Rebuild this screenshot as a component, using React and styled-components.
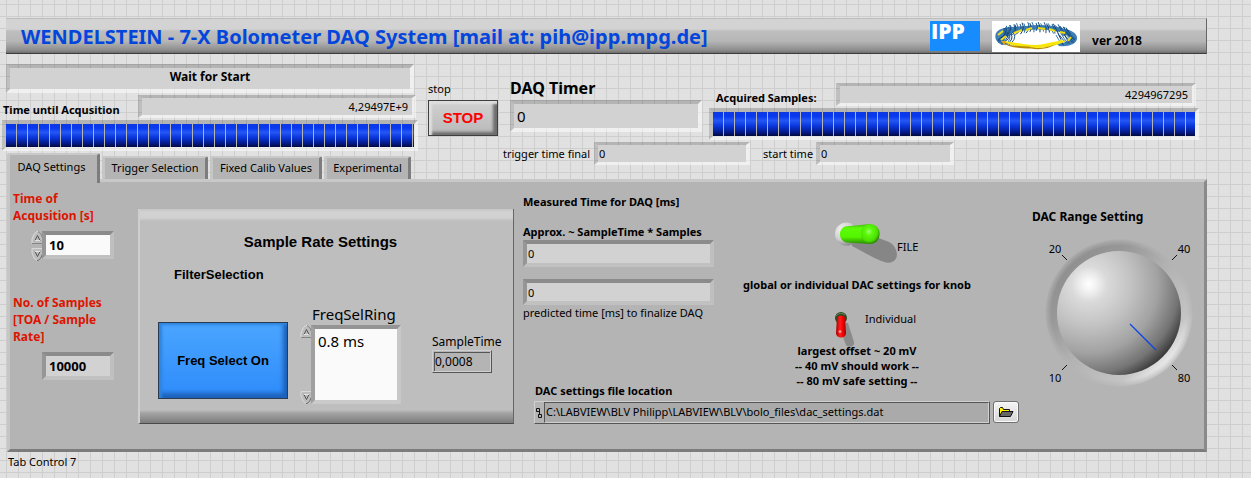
import React from "react";
import styled, { createGlobalStyle, css } from "styled-components";

const UI = `"Noto Sans", "Open Sans", sans-serif`;
const ARIAL = `"Liberation Sans", Arial, sans-serif`;

const GlobalStyle = createGlobalStyle`
  * { box-sizing: border-box; }
  body {
    margin: 0;
    min-height: 100vh;
    background-color: #e1e1e1;
    background-image:
      linear-gradient(to right, #cecece 1px, transparent 1px),
      linear-gradient(to bottom, #cecece 1px, transparent 1px);
    background-size: 12px 12px;
    background-position: 6px 4px;
    font-family: ${UI};
    font-size: 11px;
    line-height: 16px;
    color: #000;
  }
  input, button, select, output { font: inherit; color: inherit; }
`;

const Page = styled.main`
  padding: 18px 44px 8px 0;
`;

/* ---------- header ---------- */

const Header = styled.header`
  display: flex;
  align-items: flex-start;
  height: 36px;
  margin-left: 6px;
  padding: 2px 64px 0 15px;
  border-top: 1px solid #bdbdbd;
  border-right: 1px solid #666;
  border-bottom: 1px solid #3c3c3c;
  background: linear-gradient(#d3d3d3 0 10px, #bebebe 12px, #b6b6b6 22px, #8e8e8e 31px, #6e6e6e);
`;

const Title = styled.h1`
  flex: 1;
  margin: 0;
  font-size: 20px;
  line-height: 31px;
  font-weight: 700;
  color: #0446dc;
  white-space: nowrap;
`;

const IppLogo = styled.span`
  width: 50px;
  height: 30px;
  margin: 0 12px 0 0;
  padding-left: 1px;
  background: #168cff;
  color: #fff;
  font-family: "Open Sans", sans-serif;
  font-size: 21px;
  line-height: 20px;
  font-weight: 800;
`;

const Version = styled.span`
  padding: 11px 0 0 12px;
  font-size: 12px;
  line-height: 18px;
  font-weight: 700;
`;

/* ---------- shared parts ---------- */

const bevel = {
  page: css`
    border-color: rgba(0, 0, 0, 0.2) rgba(255, 255, 255, 0.5) rgba(255, 255, 255, 0.5) rgba(0, 0, 0, 0.15);
  `,
  panel: css`
    border-color: #8b8b8b #bfbfbf #c1c1c1 #969696;
  `,
};

const Field = styled.input`
  display: block;
  width: ${(p) => p.$width || "100%"};
  min-width: 0;
  height: ${(p) => p.$height || 23}px;
  padding: 0 4px 0 ${(p) => (p.$size ? 3 : 1)}px;
  border: ${(p) => (p.$height > 23 ? 4 : 3)}px solid;
  ${(p) => bevel[p.$on || "page"]}
  border-left-width: 4px;
  border-right-width: 4px;
  border-radius: 0;
  outline: none;
  background: ${(p) => (p.$editable ? "#fafafa" : "#d2d2d2")} padding-box;
  font-size: ${(p) => p.$size || 11}px;
  font-weight: ${(p) => (p.$bold ? 700 : 400)};
  text-align: ${(p) => p.$align || "left"};
`;

const Label = styled.label`
  display: block;
  font-size: ${(p) => p.$size || 11}px;
  font-weight: ${(p) => (p.$bold ? 700 : 400)};
  line-height: ${(p) => p.$line || 16}px;
  white-space: nowrap;
`;

const Message = styled.output`
  display: block;
  height: 29px;
  margin: 0 4px;
  border: 4px solid;
  ${bevel.page}
  background: #d2d2d2 padding-box;
  font-size: 12px;
  font-weight: 700;
  line-height: 18px;
  text-align: center;
`;

const Progress = styled.div`
  height: 32px;
  border: 4px solid;
  ${bevel.page}
  background:
    repeating-linear-gradient(to right, transparent 0 10px, #b4b4b4 10px 11px) padding-box,
    linear-gradient(#0d38e2, #0839f0 18%, #2457f5 36%, #0a36dc 58%, #041c90 82%, #02093f) padding-box;
`;

/* ---------- status area ---------- */

const Status = styled.section`
  display: flex;
  align-items: stretch;
  height: 125px;
`;

const StatusLeft = styled.div`
  display: flex;
  flex-direction: column;
  width: 416px;
  margin-left: 2px;
  padding-top: 10px;
`;

const CountdownRow = styled.div`
  display: flex;
  justify-content: space-between;
  align-items: flex-end;
  margin: 2px 2px 2px 1px;
`;

const StatusRight = styled.div`
  flex: 1;
  min-width: 0;
  padding: 9px 8px 0 10px;
`;

const MonitorRow = styled.div`
  display: flex;
  align-items: flex-start;
  margin-bottom: 2px;
`;

const StopGroup = styled.div`
  width: 82px;
  padding-top: 18px;
`;

const TimerGroup = styled.div`
  width: 192px;
  margin-right: 7px;
  padding-top: 13px;
`;

const SamplesGroup = styled.div`
  flex: 1;
  min-width: 0;
  padding-top: 20px;
`;

const SamplesRow = styled.div`
  display: flex;
  align-items: flex-end;
  justify-content: space-between;
  margin: 0 3px 2px 7px;
`;

const TimesRow = styled.div`
  display: flex;
  align-items: center;
  padding-left: 75px;
`;

const TimeItem = styled.div`
  display: flex;
  align-items: center;
  justify-content: space-between;
  width: ${(p) => p.$width}px;
  margin-right: 13px;
`;

const StopButton = styled.button`
  display: block;
  width: 70px;
  height: 36px;
  margin-top: 3px;
  padding: 0;
  border: 1px solid #3f3f3f;
  border-radius: 0;
  background: linear-gradient(#d2d2d2, #b8b8b8);
  box-shadow: inset 3px 3px 2px #dedede, inset -4px -3px 3px #6d6d6d;
  color: #f00;
  font-family: ${ARIAL};
  font-size: 15px;
  font-weight: 700;
`;

/* ---------- tabs ---------- */

const TabList = styled.div`
  display: flex;
  align-items: flex-end;
  gap: 2px;
  height: 28px;
  margin: auto 0 0 5px;
`;

const Tab = styled.button`
  height: ${(p) => (p.$active ? 30 : 23)}px;
  width: ${(p) => p.$width}px;
  margin-bottom: ${(p) => (p.$active ? -4 : 0)}px;
  padding: ${(p) => (p.$active ? "0 4px 5px 0" : "0 0 2px")};
  position: relative;
  border: solid;
  border-width: 2px 3px 0 3px;
  border-color: #c9c9c9 #7d7d7d transparent #c6c6c6;
  border-radius: 2px 2px 0 0;
  background: #b4b4b4;
  white-space: nowrap;
`;

const Panel = styled.section`
  display: flex;
  align-items: flex-start;
  min-height: 273px;
  margin-left: 7px;
  border: 3px solid;
  border-color: #c8c8c8 #8a8a8a #7c7c7c #c6c6c6;
  background: #b4b4b4;
`;

const Caption = styled.div`
  padding: 2px 0 0 1px;
  margin-left: 7px;
`;

/* ---------- acquisition column ---------- */

const Acquisition = styled.div`
  display: flex;
  flex-direction: column;
  gap: 33px;
  width: 128px;
  padding: 8px 0 0 3px;
`;

const RedLabel = styled.label`
  display: block;
  width: 108px;
  margin-bottom: 7px;
  color: #dc1400;
  font-size: 12px;
  font-weight: 700;
  line-height: 17px;
`;

const SpinRow = styled.div`
  display: flex;
  align-items: flex-start;
  min-height: 30px;
  padding-left: ${(p) => p.$indent}px;
`;

const Spinner = styled.div`
  display: flex;
  flex-direction: column;
  justify-content: space-between;
  align-self: stretch;
  width: 11px;
`;

const SpinButton = styled.button`
  width: 13px;
  height: 14px;
  padding: 0;
  border: 0;
  background: none;
  line-height: 0;
`;

/* ---------- sample rate card ---------- */

const RateCard = styled.section`
  width: 376px;
  height: 215px;
  margin-top: 27px;
  padding-top: 24px;
  border-left: 2px solid #cfcfcf;
  border-right: 1px solid #666;
  border-bottom: 1px solid #4a4a4a;
  background: linear-gradient(#c4c4c4, #d2d2d2 3px, #d0d0d0 9px, #bebebe 12px, #bebebe 201px, #a4a4a4 204px, #7c7c7c 214px);
`;

const RateTitle = styled.h2`
  margin: 0 12px 15px 0;
  font-family: ${ARIAL};
  font-size: 15px;
  font-weight: 700;
  line-height: 18px;
  text-align: center;
`;

const FilterTitle = styled.h3`
  margin: 0 0 19px 34px;
  font-family: ${ARIAL};
  font-size: 13px;
  font-weight: 700;
  line-height: 18px;
`;

const RateRow = styled.div`
  display: flex;
  align-items: flex-start;
  padding-left: 18px;
`;

const FreqButton = styled.button`
  width: 130px;
  height: 77px;
  margin: 19px 12px 0 0;
  padding: 0;
  border: 1px solid #2b3c52;
  border-radius: 0;
  background: linear-gradient(#4aa5ff, #2e8bfa);
  box-shadow: inset 3px 2px 3px #2f83dc, inset -4px -5px 4px #1c61b8;
  font-family: ${ARIAL};
  font-size: 13px;
  font-weight: 700;
`;

const RingGroup = styled.div`
  width: 101px;
  margin-right: 31px;
`;

const RingLabel = styled(Label)`
  padding-left: 12px;
`;

const RingRow = styled.div`
  display: flex;
`;

const RingList = styled.select`
  width: 90px;
  height: 79px;
  padding: 2px 0 0;
  border: 4px solid;
  border-color: #949494 #c8c8c8 #cacaca #a0a0a0;
  border-radius: 0;
  outline: none;
  appearance: none;
  overflow: hidden;
  background: #fafafa;
  font-size: 15px;
  line-height: 22px;
  option { padding: 0 3px; }
`;

const TimeGroup = styled.div`
  padding-top: 31px;
`;

const FlatField = styled.input`
  display: block;
  width: 60px;
  height: 23px;
  padding: 0 2px;
  border: 1px solid;
  border-color: #d0d0d0 #555 #555 #d0d0d0;
  border-radius: 0;
  outline: none;
  background: #b4b4b4;
  box-shadow: inset 1px 1px #b4b4b4, inset -1px -1px #d0d0d0, inset 2px 2px #555;
  font-size: 12px;
`;

/* ---------- measured times, switches, path ---------- */

const Main = styled.div`
  flex: 1;
  min-width: 0;
  padding-left: 9px;
`;

const Upper = styled.div`
  display: flex;
  gap: 28px;
`;

const Measured = styled.div`
  display: flex;
  flex-direction: column;
  width: 191px;
  padding-top: 12px;
`;

const Approx = styled.div`
  margin: 14px 0 12px;
`;

const PathLabel = styled(Label)`
  margin: auto 0 0 12px;
`;

const Switches = styled.div`
  width: 230px;
  padding: 40px 0 11px;
`;

const SwitchLabel = styled.label`
  display: flex;
  align-items: ${(p) => (p.$small ? "flex-start" : "center")};
  gap: ${(p) => (p.$small ? 10 : 0)}px;
  height: ${(p) => (p.$small ? 30 : 41)}px;
  padding: ${(p) => (p.$small ? "0" : "8px")} 0 0 92px;
  svg { flex: none; overflow: visible; margin-top: ${(p) => (p.$small ? 0 : -8)}px; }
`;

const HiddenCheck = styled.input`
  position: absolute;
  opacity: 0;
`;

const Note = styled.p`
  margin: ${(p) => p.$margin || "0"};
  font-weight: 700;
  line-height: ${(p) => p.$line || 16}px;
  text-align: center;
  white-space: nowrap;
`;

const PathRow = styled.div`
  display: flex;
  gap: 3px;
  margin-top: 2px;
  padding: 0 13px 0 11px;
`;

const PathBox = styled.div`
  flex: 1;
  display: flex;
  align-items: center;
  min-width: 0;
  height: 23px;
  padding-left: 1px;
  border: 1px solid;
  border-color: #d0d0d0 #555 #555 #d0d0d0;
`;

const PathInput = styled.input`
  flex: 1;
  min-width: 0;
  height: 21px;
  margin-left: 2px;
  padding: 0 1px 2px;
  border: 1px solid;
  border-color: #555 #d0d0d0 #d0d0d0 #555;
  border-radius: 0;
  outline: none;
  background: #aaa;
`;

const BrowseButton = styled.button`
  width: 26px;
  height: 22px;
  padding: 0;
  border: 1px solid #707070;
  border-radius: 3px;
  background: linear-gradient(#f4f4f4, #d6d6d6);
  box-shadow: inset 0 0 0 1px #fafafa;
  line-height: 0;
`;

/* ---------- knob ---------- */

const KnobColumn = styled.div`
  width: 172px;
  padding-top: 26px;
`;

const Dial = styled.div`
  position: relative;
  width: 158px;
  margin: 12px 0 0 8px;
  line-height: 0;
`;

const DialRange = styled.input`
  position: absolute;
  inset: 0;
  width: 100%;
  height: 100%;
  margin: 0;
  opacity: 0;
`;

/* ---------- drawings ---------- */

function StellaratorLogo() {
  const coils = [];
  for (let i = 0; i < 72; i++) {
    const a = (i / 72) * Math.PI * 2;
    const side = Math.abs(Math.cos(a));
    const x = 44 + 35 * Math.cos(a);
    const y = 14 + (Math.sin(a) > 0 ? 7 : 6) * Math.sin(a) - (1 - side) * 2;
    if (Math.sin(a) > 0.3 && x > 20 && x < 66) continue;
    const lean = 0.6 * Math.cos(a) + (i % 3) * 0.12;
    const len = 4 + side * 2 + (i % 2);
    coils.push({
      x1: x - Math.sin(lean) * len,
      y1: y - Math.cos(lean) * len,
      x2: x + Math.sin(lean) * len,
      y2: y + Math.cos(lean) * len,
    });
  }
  return (
    <svg width="88" height="31" viewBox="0 0 88 31" aria-label="Stellarator">
      <rect width="88" height="31" fill="#fff" />
      <path
        d="M10 24C4 21 2 17 4 12 8 5 22 6 34 5c12-2 26-1 36 2 10 2 16 6 15 11-1 5-8 8-18 7l-3-3c8 1 14-2 14-5 0-4-8-6-16-7-12-2-24-2-36 1-8 1-14 4-14 7 0 2 3 4 8 5z"
        fill="#3f7fb8"
      />
      <g strokeWidth="1" fill="none">
        {coils.map((c, i) => (
          <path
            key={i}
            d={`M${c.x1} ${c.y1}Q${c.x1 + 3} ${(c.y1 + c.y2) / 2} ${c.x2} ${c.y2}`}
            stroke={["#123f6b", "#2d72ad", "#1b5587"][i % 3]}
          />
        ))}
      </g>
      <path
        d="M6 14l5-4M9 19l5-4M22 12l8-3M34 9l6-2M46 7l7 1M57 8l6 2M68 11l5 1M79 16l-3 4M70 19l-5 3"
        stroke="#f0dc14"
        strokeWidth="2"
      />
      <path d="M9 20c10 0 21 4 34 4 12 0 20-5 31-4-8 4-18 7-30 7-14 0-24-2-35-7z" fill="#f8e60a" />
      <path d="M10 22c8 3 18 3 27 3.500 8 3 20 1 27-2.500-7 5-17 6-25 4.500-11 0-21-1-29-5.500z" fill="#b58c0c" />
      <path d="M9 20l5 1-2 3z" fill="#f09a10" />
    </svg>
  );
}

function SpinArrow({ down }) {
  return (
    <svg width="13" height="14" viewBox="0 0 13 14">
      <g transform={down ? "rotate(180 6.5 7)" : undefined}>
        <path d="M1 12.500V8L3.500 2.500 6 .5h1.500L10 3l2 5v4.500z" fill="#bcbcbc" />
        <path d="M1 12.500V8L3.500 2.500 6 .5h1" fill="none" stroke={down ? "#6c6c6c" : "#dedede"} />
        <path d="M7 .5L10 3l2 5v4.500H1" fill="none" stroke={down ? "#d8d8d8" : "#858585"} />
        <path d="M4 9.500L6.500 4.500 9 9.500" fill="none" stroke="#555" />
        <path d="M4 9.500h5" stroke="#e2e2e2" />
      </g>
    </svg>
  );
}

function FileToggle() {
  return (
    <svg width="63" height="41" viewBox="0 0 63 41">
      <defs>
        <radialGradient id="cup" cx="0.3" cy="0.3" r="0.75">
          <stop offset="0" stopColor="#f2f2f2" />
          <stop offset="0.6" stopColor="#cfcfcf" />
          <stop offset="1" stopColor="#888" />
        </radialGradient>
        <linearGradient id="lever" x2="0" y2="1">
          <stop offset="0" stopColor="#3fae06" />
          <stop offset="0.2" stopColor="#5cfb0a" />
          <stop offset="0.65" stopColor="#55f500" />
          <stop offset="1" stopColor="#2a8a00" />
        </linearGradient>
        <radialGradient id="tip" cx="0.42" cy="0.38" r="0.62">
          <stop offset="0" stopColor="#a2ff6c" />
          <stop offset="0.3" stopColor="#5cfa10" />
          <stop offset="0.75" stopColor="#4de000" />
          <stop offset="1" stopColor="#2a8a00" />
        </radialGradient>
      </defs>
      <path d="M18 21L42 15L55 20C63 24 66 36 59 39.500C55 42 49 40 45 38C36 34 26 28 18 24z" fill="#868686" />
      <circle cx="12.500" cy="12" r="11.500" fill="url(#cup)" />
      <path d="M11 4.500L37 2v20L12 20.500C4 18 4 7 11 4.500z" fill="url(#lever)" />
      <rect x="27" y="2" width="18.500" height="20" rx="9" fill="url(#tip)" />
    </svg>
  );
}

function IndividualToggle() {
  return (
    <svg width="21" height="30" viewBox="0 0 21 30">
      <defs>
        <linearGradient id="redLever">
          <stop offset="0" stopColor="#a80000" />
          <stop offset="0.4" stopColor="#ff1c1c" />
          <stop offset="0.7" stopColor="#f40000" />
          <stop offset="1" stopColor="#970000" />
        </linearGradient>
      </defs>
      <path d="M10 12L14 12L20 31c1 5-6 6-8 3L6 18z" fill="#8a8a8a" />
      <circle cx="7" cy="7" r="6" fill="#2d4a22" />
      <path d="M2 5a6 6 0 0 1 9-1" fill="none" stroke="#6d8364" />
      <path d="M3 6q4-3 8 0L12 22c0 6-10 6-10 0z" fill="url(#redLever)" />
      <circle cx="6" cy="20.500" r="1.500" fill="#ff8c8c" />
    </svg>
  );
}

function Knob() {
  return (
    <svg width="158" height="150" viewBox="0 0 158 150">
      <defs>
        <linearGradient id="ring" x1="0.1" y1="0.1" x2="0.9" y2="0.9">
          <stop offset="0" stopColor="#8b8b8b" />
          <stop offset="0.25" stopColor="#989898" />
          <stop offset="0.5" stopColor="#b2b2b2" />
          <stop offset="0.8" stopColor="#c4c4c4" />
          <stop offset="0.9" stopColor="#e4e4e4" />
          <stop offset="0.97" stopColor="#fff" />
        </linearGradient>
        <radialGradient id="fade">
          <stop offset="0.91" stopColor="#b4b4b4" stopOpacity="0" />
          <stop offset="1" stopColor="#b4b4b4" stopOpacity="0.9" />
        </radialGradient>
        <radialGradient id="ball" gradientUnits="userSpaceOnUse" cx="49" cy="46" r="106">
          <stop offset="0" stopColor="#fff" />
          <stop offset="0.06" stopColor="#f4f4f4" />
          <stop offset="0.17" stopColor="#dadada" />
          <stop offset="0.4" stopColor="#c2c2c2" />
          <stop offset="0.65" stopColor="#a2a2a2" />
          <stop offset="0.85" stopColor="#747474" />
          <stop offset="1" stopColor="#2e2e2e" />
        </radialGradient>
      </defs>
      <circle cx="79" cy="75" r="73.500" fill="url(#ring)" />
      <circle cx="79" cy="75" r="74" fill="url(#fade)" />
      <circle cx="79" cy="75" r="62" fill="url(#ball)" />
      <path d="M90 86L116 112" stroke="#0a46e6" strokeWidth="1.200" />
      <path d="M22 18l5 5M137 18l-5 5M22 133l5-5M137 133l-5-5" transform="translate(0 -1)" stroke="#111" />
      <g fontFamily="Noto Sans" fontSize="11" textAnchor="middle">
        <text x="15" y="15">20</text>
        <text x="144" y="15">40</text>
        <text x="15" y="144">10</text>
        <text x="144" y="144">80</text>
      </g>
    </svg>
  );
}

function FolderIcon() {
  return (
    <svg width="16" height="12" viewBox="0 0 16 12">
      <path d="M1.500 10.500V2.500l1-1h2l1 2h6v2" fill="#fff200" stroke="#111" />
      <path d="M1.500 10.500L4 5.500h11l-2.500 5z" fill="#666" stroke="#111" />
    </svg>
  );
}

function PathIcon() {
  return (
    <svg width="6" height="12" viewBox="0 0 6 12" fill="none" stroke="#111">
      <path d="M.5 1.500h3v3h-3zM2.500 7.500h3v3h-3zM3.500 4v4" />
    </svg>
  );
}

function SpinPair({ name }) {
  return (
    <Spinner>
      <SpinButton aria-label={`Increase ${name}`}><SpinArrow /></SpinButton>
      <SpinButton aria-label={`Decrease ${name}`}><SpinArrow down /></SpinButton>
    </Spinner>
  );
}

const tabs = [
  ["DAQ Settings", 93],
  ["Trigger Selection", 106],
  ["Fixed Calib Values", 112],
  ["Experimental", 87],
];

export default function App() {
  return (
    <>
      <GlobalStyle />
      <Page>
        <Header>
          <Title>WENDELSTEIN - 7-X Bolometer DAQ System [mail at: pih@ipp.mpg.de]</Title>
          <IppLogo>IPP</IppLogo>
          <StellaratorLogo />
          <Version>ver 2018</Version>
        </Header>

        <Status>
          <StatusLeft>
            <Message>Wait for Start</Message>
            <CountdownRow>
              <Label $bold htmlFor="countdown">Time until Acqusition</Label>
              <Field id="countdown" $width="278px" $align="right" readOnly value="4,29497E+9" />
            </CountdownRow>
            <Progress role="progressbar" aria-label="Time until Acqusition" aria-valuenow={100} />
            <TabList role="tablist">
              {tabs.map(([name, width], i) => (
                <Tab key={name} role="tab" aria-selected={i === 0} $active={i === 0} $width={width}>
                  {name}
                </Tab>
              ))}
            </TabList>
          </StatusLeft>

          <StatusRight>
            <MonitorRow>
              <StopGroup>
                <Label as="div">stop</Label>
                <StopButton>STOP</StopButton>
              </StopGroup>
              <TimerGroup>
                <Label $bold $size={16} $line={24} htmlFor="timer">DAQ Timer</Label>
                <Field id="timer" $height={32} $size={15} readOnly value="0" />
              </TimerGroup>
              <SamplesGroup>
                <SamplesRow>
                  <Label $bold htmlFor="samples">Acquired Samples:</Label>
                  <Field id="samples" $width="75%" $align="right" readOnly value="4294967295" />
                </SamplesRow>
                <Progress role="progressbar" aria-label="Acquired Samples" aria-valuenow={100} />
              </SamplesGroup>
            </MonitorRow>
            <TimesRow>
              <TimeItem $width={247}>
                <Label htmlFor="trigger">trigger time final</Label>
                <Field id="trigger" $width="156px" readOnly value="0" />
              </TimeItem>
              <TimeItem $width={191}>
                <Label htmlFor="start">start time</Label>
                <Field id="start" $width="138px" readOnly value="0" />
              </TimeItem>
            </TimesRow>
          </StatusRight>
        </Status>

        <Panel role="tabpanel">
          <Acquisition>
            <div>
              <RedLabel htmlFor="time">Time of Acqusition [s]</RedLabel>
              <SpinRow $indent={18}>
                <SpinPair name="time" />
                <Field id="time" $on="panel" $width="72px" $height={28} $size={13} $bold $editable defaultValue="10" />
              </SpinRow>
            </div>
            <div>
              <RedLabel htmlFor="count">No. of Samples [TOA / Sample Rate]</RedLabel>
              <SpinRow $indent={29}>
                <Field id="count" $on="panel" $width="72px" $height={28} $size={13} $bold readOnly value="10000" />
              </SpinRow>
            </div>
          </Acquisition>

          <RateCard>
            <RateTitle>Sample Rate Settings</RateTitle>
            <FilterTitle>FilterSelection</FilterTitle>
            <RateRow>
              <FreqButton>Freq Select On</FreqButton>
              <RingGroup>
                <RingLabel $size={15} $line={22} htmlFor="ring-list">FreqSelRing</RingLabel>
                <RingRow>
                  <SpinPair name="frequency" />
                  <RingList id="ring-list" size={3}>
                    <option>0.8 ms</option>
                  </RingList>
                </RingRow>
              </RingGroup>
              <TimeGroup>
                <Label $size={12} htmlFor="sample-time">SampleTime</Label>
                <FlatField id="sample-time" readOnly value="0,0008" />
              </TimeGroup>
            </RateRow>
          </RateCard>

          <Main>
            <Upper>
              <Measured>
                <Label as="div" $bold>Measured Time for DAQ [ms]</Label>
                <Approx>
                  <Label $bold htmlFor="approx">Approx. ~ SampleTime * Samples</Label>
                  <Field id="approx" $on="panel" $height={27} readOnly value="0" />
                </Approx>
                <Field id="predicted" $on="panel" $height={26} readOnly value="0" />
                <Label htmlFor="predicted">predicted time [ms] to finalize DAQ</Label>
                <PathLabel $bold htmlFor="path">DAC settings file location</PathLabel>
              </Measured>
              <Switches>
                <SwitchLabel>
                  <HiddenCheck type="checkbox" defaultChecked />
                  <FileToggle />
                  FILE
                </SwitchLabel>
                <Note $margin="14px 0 18px">global or individual DAC settings for knob</Note>
                <SwitchLabel $small>
                  <HiddenCheck type="checkbox" />
                  <IndividualToggle />
                  Individual
                </SwitchLabel>
                <Note $line={15} $margin="2px 0 0">
                  largest offset ~ 20 mV
                  <br />
                  -- 40 mV should work --
                  <br />
                  -- 80 mV safe setting --
                </Note>
              </Switches>
            </Upper>
            <PathRow>
              <PathBox>
                <PathIcon />
                <PathInput id="path" defaultValue="C:\LABVIEW\BLV Philipp\LABVIEW\BLV\bolo_files\dac_settings.dat" />
              </PathBox>
              <BrowseButton aria-label="Browse"><FolderIcon /></BrowseButton>
            </PathRow>
          </Main>

          <KnobColumn>
            <Label $bold $size={12} $line={18} htmlFor="knob">DAC Range Setting</Label>
            <Dial>
              <Knob />
              <DialRange id="knob" type="range" min="10" max="80" defaultValue="80" />
            </Dial>
          </KnobColumn>
        </Panel>
        <Caption>Tab Control 7</Caption>
      </Page>
    </>
  );
}
